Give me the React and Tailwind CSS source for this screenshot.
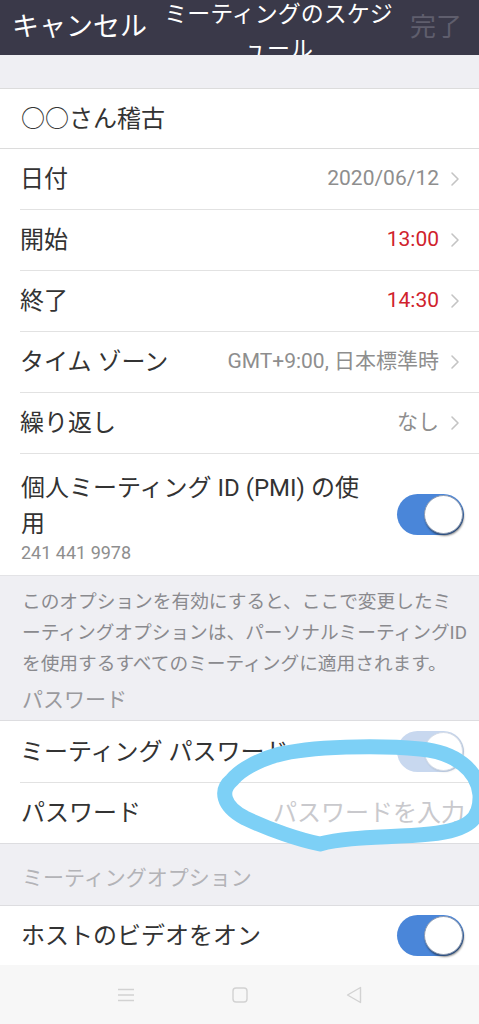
import React from 'react';

const Chevron = () => (
  <svg width="10" height="16" viewBox="0 0 10 16" className="ml-[11px] shrink-0">
    <path d="M2 2l6 6-6 6" fill="none" stroke="#c4c4c4" strokeWidth="1.6" strokeLinecap="round" strokeLinejoin="round" />
  </svg>
);

function Toggle({ disabled }) {
  return (
    <div className={`relative w-[67px] h-[41px] rounded-full shrink-0 ${disabled ? 'bg-[#c8d8ef]' : 'bg-[#4a86d9]'}`}>
      <div
        className={`absolute right-[1px] top-[1px] w-[39px] h-[39px] rounded-full bg-white border ${
          disabled ? 'border-[#d6dde8] shadow-[1px_1px_2px_rgba(0,0,0,0.12)]' : 'border-[#8d9bb2] shadow-[1px_2px_2px_rgba(0,0,0,0.45)]'
        }`}
      />
    </div>
  );
}

function Row({ label, value, valueClass = 'text-[#8e8e8e]' }) {
  return (
    <div className="bg-white pl-[20px]">
      <div className="h-[61px] flex items-center justify-between pr-[19px] border-b border-[#e2e2e2]">
        <span className="text-[24px] text-[#333]">{label}</span>
        <div className="flex items-center">
          <span className={`text-[21px] ${valueClass}`}>{value}</span>
          <Chevron />
        </div>
      </div>
    </div>
  );
}

export default function App() {
  return (
    <div className="relative w-[479px] h-[1024px] overflow-hidden bg-[#efeff3] font-['Roboto','Noto_Sans_CJK_JP',sans-serif]">
      {/* header */}
      <header className="h-[55px] bg-[#3a3949] overflow-hidden flex items-start">
        <span className="pl-[12px] text-[27px] leading-[55px] text-white shrink-0">キャンセル</span>
        <div className="flex-1 px-[8px] -mt-[3px] text-center text-[23px] leading-[35px] text-white whitespace-nowrap">
          ミーティングのスケジ
          <br />
          ュール
        </div>
        <span className="pr-[17px] text-[26px] leading-[55px] text-[#5f5e6d] shrink-0">完了</span>
      </header>

      <div className="h-[33px]" />

      {/* topic */}
      <div className="h-[61px] bg-white border-y border-[#dcdcdc] flex items-center pl-[21px]">
        <span className="text-[24px] text-[#333]">○○さん稽古</span>
      </div>

      <Row label="日付" value="2020/06/12" />
      <Row label="開始" value="13:00" valueClass="text-[#d0222c]" />
      <Row label="終了" value="14:30" valueClass="text-[#d0222c]" />
      <Row label="タイム ゾーン" value="GMT+9:00, 日本標準時" />
      <Row label="繰り返し" value="なし" />

      {/* PMI */}
      <div className="h-[121px] bg-white flex items-center justify-between pl-[21px] pr-[15px]">
        <div className="w-[350px] pt-[4px]">
          <div className="text-[24px] leading-[36px] text-[#333]">個人ミーティング ID (PMI) の使用</div>
          <div className="text-[18px] leading-[22px] text-[#8e8e8e]">241 441 9978</div>
        </div>
        <Toggle />
      </div>

      {/* description */}
      <div className="h-[145px] border-t border-[#e3e3e6] pl-[22px] pr-[8px] pt-[11px]">
        <p className="text-[18.7px] leading-[31px] text-[#8a8a8e]">
          このオプションを有効にすると、ここで変更したミ
          <br />
          ーティングオプションは、パーソナルミーティングID
          <br />
          を使用するすべてのミーティングに適用されます。
        </p>
        <p className="mt-[5px] text-[21px] leading-[30px] text-[#9a9a9e]">パスワード</p>
      </div>

      {/* password group */}
      <div className="bg-white border-y border-[#dddde0]">
        <div className="pl-[20px]">
          <div className="h-[62px] flex items-center justify-between pr-[15px] border-b border-[#e2e2e2]">
            <span className="text-[24px] text-[#333]">ミーティング パスワード</span>
            <Toggle disabled />
          </div>
        </div>
        <div className="h-[60px] flex items-center justify-between pl-[21px] pr-[14px]">
          <span className="text-[24px] text-[#333]">パスワード</span>
          <span className="text-[24px] text-[#c9c9cd]">パスワードを入力</span>
        </div>
      </div>

      {/* options header */}
      <div className="h-[61px] pl-[22px] pt-[19px]">
        <p className="text-[21px] leading-[30px] text-[#b3b3b7]">ミーティングオプション</p>
      </div>

      <div className="h-[60px] bg-white border-t border-[#dddde0] flex items-center justify-between pl-[21px] pr-[15px]">
        <span className="text-[24px] text-[#333]">ホストのビデオをオン</span>
        <Toggle />
      </div>

      {/* system nav */}
      <nav className="h-[59px] bg-[#f7f7f7] flex items-center justify-center gap-[98px]">
        <svg width="16" height="16" viewBox="0 0 16 16">
          <path d="M0 2.5h16M0 8h16M0 13.5h16" stroke="#d2d2d2" strokeWidth="1.4" />
        </svg>
        <svg width="16" height="16" viewBox="0 0 16 16">
          <rect x="1" y="1" width="14" height="14" rx="3" fill="none" stroke="#d2d2d2" strokeWidth="1.4" />
        </svg>
        <svg width="16" height="18" viewBox="0 0 16 18">
          <path d="M14.5 1.5L1.5 9l13 7.5z" fill="none" stroke="#d2d2d2" strokeWidth="1.4" strokeLinejoin="round" />
        </svg>
      </nav>

      {/* hand-drawn scribble overlay */}
      <svg className="absolute left-0 top-0 pointer-events-none" width="479" height="1024" viewBox="0 0 479 1024">
        <path
          d="M277 755 C310 746 380 745 420 749 C455 752 478 770 480 795 C481 818 470 830 430 834 C390 838 350 836 320 844 C300 840 270 830 245 818 C222 806 220 790 232 780 C240 770 258 760 280 754"
          fill="none"
          stroke="#7dd0f6"
          strokeWidth="15"
          strokeLinecap="round"
          strokeLinejoin="round"
        />
      </svg>
    </div>
  );
}
